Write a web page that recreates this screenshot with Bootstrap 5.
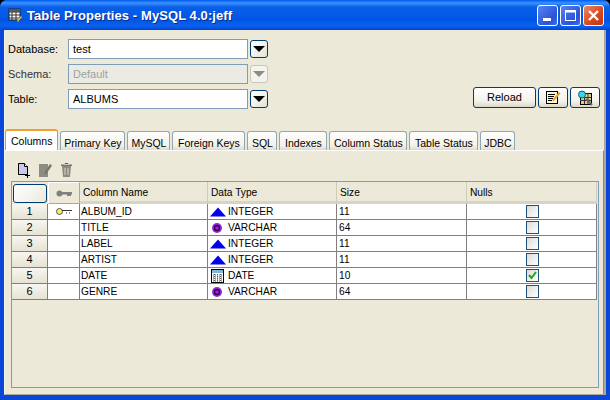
<!DOCTYPE html>
<html lang="en">
<head>
  <meta charset="UTF-8">
  <title>Table Properties</title>
  <link href="https://cdn.jsdelivr.net/npm/bootstrap@5.3.0/dist/css/bootstrap.min.css" rel="stylesheet">
  <style>
    html, body { width: 610px; height: 400px; margin: 0; overflow: hidden; background: #000; }
    body { font-family: "Liberation Sans", Arial, sans-serif; font-size: 11px; color: #000; line-height: 13px; }
    svg { display: block; }
    .xp-win { width: 610px; height: 400px; border-radius: 7px 7px 0 0; overflow: hidden; background: #0a46d8; }
    .xp-title {
      height: 30px; padding: 0 6px 0 8px;
      background: linear-gradient(to bottom, #0058ee 0, #3a93ff 3px, #0a5fe8 7px, #0055e5 20px, #0a62f0 26px, #0043cf 30px);
    }
    .xp-title-text { font-size: 13px; font-weight: bold; color: #fff; letter-spacing: .08px; margin-left: 4px; text-shadow: 1px 1px 0 #0f2a8c; }
    .cap-btn { width: 21px; height: 21px; border: 1px solid #fff; border-radius: 3px; background: linear-gradient(135deg, #5b84f0, #2a52d8 70%, #3d6cf0); margin-left: 2px; }
    .cap-close { background: linear-gradient(135deg, #e88a6c, #d8461c 60%, #c03510); }
    .xp-body { height: 365px; margin: 0 4px; background: #ece9d8; border-bottom: 1px solid #aca899; border-right: 2px solid #aca899; border-left: 1px solid #f4f2e8; }
    .top-area { height: 100px; padding: 9px 3px 0 3px; }
    .field-row { height: 20px; margin-bottom: 5px; }
    .field-label { width: 60px; }
    .field-label.off { color: #333; }
    .combo-box { width: 180px; height: 20px; border: 1px solid #7f9db9; background: #fff; padding: 0 4px; line-height: 18px; font-size: 11px; }
    .combo-box.off { background: #ebebe4; color: #a0a0a0; }
    .combo-btn { width: 18px; height: 18px; margin-left: 2px; border: 1px solid #003c74; border-radius: 3px; background: linear-gradient(135deg, #fff, #e4e2d6); }
    .combo-btn.off { border-color: #c9c7ba; background: #f4f3ec; }
    .tri-down { width: 0; height: 0; border-left: 6px solid transparent; border-right: 6px solid transparent; border-top: 6px solid #000; }
    .combo-btn.off .tri-down { border-top-color: #8c8c88; }
    .action-btns { padding: 48px 0 0 0; margin-left: auto; margin-right: 1px; gap: 2px; }
    .xp-btn { height: 21px; padding: 0; border: 1px solid #003c74; border-radius: 3px; background: linear-gradient(to bottom, #fff, #f3f2ea 70%, #dcd8c8); font-size: 11px; color: #000; }
    .xp-reload { width: 63px; }
    .xp-icon { width: 30px; }
    .xp-tabs { height: 20px; padding-left: 0; border: 0; gap: 2px; flex-wrap: nowrap; }
    .xp-tabs .nav-link {
      height: 19px; margin: 1px 0 0 0; padding: 5px 0 0 0; color: #000; font-size: 10.5px; line-height: 13px; white-space: nowrap; text-align: center;
      border: 1px solid #91a7b4; border-bottom: 0; border-radius: 3px 3px 0 0; background: linear-gradient(to bottom, #fff, #f3f1e8 75%, #dedbcc);
    }
    .xp-tabs .nav-link.active { height: 21px; margin: -1px 0 0 0; padding: 4px 5px 0 5px; background: #fff; border: 1px solid #91a7b4; border-top: 2px solid #f0a030; border-bottom: 0; }
    .tab-pk { width: 65px; }
    .tab-my { width: 43px; }
    .tab-fk { width: 73px; }
    .tab-sq { width: 30px; }
    .tab-ix { width: 48px; }
    .tab-cs { width: 78px; }
    .tab-ts { width: 69px; }
    .tab-jd { width: 35px; }
    .tab-pane-box { height: 244px; border-top: 1px solid #fff; border-right: 1px solid #8a8a80; padding: 9px 6px 0 6px; }
    .tool-row { height: 21px; padding: 2px 0 0 5px; gap: 6px; align-items: flex-start; }
    .grid-box { width: 588px; height: 207px; border: 1px solid #7f9db9; }
    .prop-grid { width: 585px; table-layout: fixed; border-collapse: separate; border-spacing: 0; margin: 0; --bs-table-bg: transparent; }
    .prop-grid > :not(caption) > * > * { padding: 0 3px; border: 0; box-shadow: none; font-size: 10.2px; line-height: 13px; vertical-align: middle; color: #000; }
    .prop-grid thead th { height: 22px; font-weight: normal; background: #ece9d8; border-bottom: 3px solid #d8d4c4; border-right: 1px solid #cfccbc; padding: 2px 0 0 3px; }
    .prop-grid thead th.corner { padding: 0; border: 0; }
    .prop-grid thead th.corner div { width: 34px; height: 19px; margin: 1px; border: 1px solid #003c74; border-radius: 3px; background: linear-gradient(135deg, #fff, #ece9dc); }
    .prop-grid thead th.key-head { padding: 0; border: 1px solid #fff; border-right-color: #aca899; border-bottom: 1px solid #aca899; }
    .prop-grid tbody td { height: 16px; background: #fff; border-bottom: 1px solid #808080; border-right: 1px solid #808080; padding: 0 1px 0 1px; }
    .prop-grid tbody tr > td:first-child { background: linear-gradient(to bottom, #f7f6f0, #e6e3d4); text-align: center; font-size: 11px; }
    .prop-grid tbody tr > td:nth-child(5), .prop-grid tbody tr > td:last-child { padding-left: 2px; }
    .type-cell { gap: 2px; height: 14px; padding-left: 1px; }
    .type-ico { width: 16px; flex: none; }
    .chk-box { width: 13px; height: 13px; margin: 0 auto; border: 1px solid #1c5180; background: linear-gradient(135deg, #dcdcd6, #fff); }
  </style>
</head>
<body>
  <div class="xp-win d-flex flex-column">
    <!-- title bar -->
    <div class="xp-title d-flex align-items-center">
      <svg width="15" height="15" viewBox="0 0 15 15"><rect x="1" y="1" width="11" height="11" fill="#fff" stroke="#222"/><path d="M1 4h11M1 7h11M1 10h11M4 1v11M8 1v11" stroke="#333"/><path d="M1 1h11v3H1z" fill="#555"/><path d="M9 13l4-5 1 1-4 5z" fill="#e8c040"/></svg>
      <span class="xp-title-text">Table Properties - MySQL 4.0:jeff</span>
      <div class="ms-auto d-flex align-items-center">
        <div class="cap-btn d-flex align-items-end"><svg width="19" height="19" viewBox="0 0 19 19"><rect x="5" y="12" width="8" height="3" fill="#fff"/></svg></div>
        <div class="cap-btn"><svg width="19" height="19" viewBox="0 0 19 19"><rect x="4.500" y="4.500" width="10" height="10" fill="none" stroke="#fff"/><rect x="4" y="4" width="11" height="2.500" fill="#fff"/></svg></div>
        <div class="cap-btn cap-close"><svg width="19" height="19" viewBox="0 0 19 19"><path d="M5 5l9 9M14 5l-9 9" stroke="#fff" stroke-width="2.400"/></svg></div>
      </div>
    </div>

    <div class="xp-body">
      <!-- connection fields -->
      <div class="top-area d-flex">
        <div>
          <div class="field-row d-flex align-items-center">
            <div class="field-label">Database:</div>
            <div class="combo-box">test</div>
            <div class="combo-btn d-flex align-items-center justify-content-center"><div class="tri-down"></div></div>
          </div>
          <div class="field-row d-flex align-items-center">
            <div class="field-label off">Schema:</div>
            <div class="combo-box off">Default</div>
            <div class="combo-btn off d-flex align-items-center justify-content-center"><div class="tri-down"></div></div>
          </div>
          <div class="field-row d-flex align-items-center">
            <div class="field-label">Table:</div>
            <div class="combo-box">ALBUMS</div>
            <div class="combo-btn d-flex align-items-center justify-content-center"><div class="tri-down"></div></div>
          </div>
        </div>
        <div class="action-btns d-flex align-items-start">
          <button class="xp-btn xp-reload" type="button">Reload</button>
          <button class="xp-btn xp-icon d-flex align-items-center justify-content-center" type="button" aria-label="Edit">
            <svg width="16" height="15" viewBox="0 0 16 15"><rect x="1.500" y="1.500" width="11" height="12" fill="#fff8d8" stroke="#000"/><path d="M3 4.500h7M3 6.500h6M3 8.500h5M3 10.500h4" stroke="#000"/><path d="M7 10l7-8 1.500 1.500-7 8z" fill="#f0a020"/></svg>
          </button>
          <button class="xp-btn xp-icon d-flex align-items-center justify-content-center" type="button" aria-label="Find">
            <svg width="16" height="16" viewBox="0 0 16 16"><rect x="3.500" y="3.500" width="11" height="11" fill="#d8d080" stroke="#000"/><path d="M3 7.500h11M3 10.500h11M7.500 3v11M11 3v11" stroke="#333"/><path d="M9 9l6 6" stroke="#666" stroke-width="2"/><circle cx="5" cy="4.500" r="3.500" fill="#30d8f0" stroke="#106080"/></svg>
          </button>
        </div>
      </div>

      <!-- tabs -->
      <ul class="nav nav-tabs xp-tabs">
        <li class="nav-item"><a class="nav-link active" href="#">Columns</a></li>
        <li class="nav-item"><a class="nav-link tab-pk" href="#">Primary Key</a></li>
        <li class="nav-item"><a class="nav-link tab-my" href="#">MySQL</a></li>
        <li class="nav-item"><a class="nav-link tab-fk" href="#">Foreign Keys</a></li>
        <li class="nav-item"><a class="nav-link tab-sq" href="#">SQL</a></li>
        <li class="nav-item"><a class="nav-link tab-ix" href="#">Indexes</a></li>
        <li class="nav-item"><a class="nav-link tab-cs" href="#">Column Status</a></li>
        <li class="nav-item"><a class="nav-link tab-ts" href="#">Table Status</a></li>
        <li class="nav-item"><a class="nav-link tab-jd" href="#">JDBC</a></li>
      </ul>

      <div class="tab-pane-box">
        <div class="tool-row d-flex">
          <svg width="16" height="16" viewBox="0 0 16 16"><path d="M2.500 1.500h6l3 3v8h-9z" fill="#c8c8f0" stroke="#000"/><path d="M8.500 1.500v3h3" fill="#fff" stroke="#000"/><path d="M9 13.500h5M11.500 11v5" stroke="#000"/></svg>
          <svg width="15" height="16" viewBox="0 0 15 16"><path d="M1 2h9v13H1z" fill="#8c8c84"/><path d="M6 11l6-9 2 1.500-6 9z" fill="#777770"/></svg>
          <svg width="15" height="16" viewBox="0 0 15 16"><path d="M3 4h9l-1 11H4z" fill="#8c8c84"/><path d="M2 2.500h11v1.500H2z" fill="#777770"/><path d="M5.500 1h4v1.500h-4zM6 6v7M9 6v7" stroke="#ece9d8" stroke-width=".8"/></svg>
        </div>
        <div class="grid-box">
          <table class="table prop-grid">
            <colgroup><col style="width:36px"><col style="width:32px"><col style="width:128px"><col style="width:129px"><col style="width:130px"><col style="width:130px"></colgroup>
            <thead>
              <tr>
                <th class="corner"><div></div></th>
                <th class="key-head"><svg class="mx-auto" width="16" height="7" viewBox="0 0 16 7"><circle cx="3.500" cy="3.500" r="3" fill="#808080"/><rect x="6" y="2" width="10" height="2.500" fill="#808080"/><rect x="11" y="4" width="4" height="2" fill="#808080"/></svg></th>
                <th>Column Name</th><th>Data Type</th><th>Size</th><th>Nulls</th>
              </tr>
            </thead>
            <tbody id="gridRows"></tbody>
          </table>
        </div>
      </div>
    </div>
  </div>

  <script src="https://cdn.jsdelivr.net/npm/bootstrap@5.3.0/dist/js/bootstrap.bundle.min.js"></script>
  <script>
    const icons = {
      INTEGER: '<svg width="16" height="10" viewBox="0 0 16 10"><path d="M8 0.500L16 9.500H0z" fill="#0000ee"/></svg>',
      VARCHAR: '<svg width="16" height="12" viewBox="0 0 16 12"><circle cx="7" cy="6" r="5" fill="#a020e0"/><circle cx="7" cy="6" r="2.500" fill="none" stroke="#200040" stroke-width="1.300"/></svg>',
      DATE: '<svg width="16" height="14" viewBox="0 0 16 14"><rect x="1.500" y="0.500" width="12" height="13" fill="#fff" stroke="#000"/><rect x="2" y="1" width="11" height="3" fill="#80b8d8"/><path d="M3 6h9M3 8h9M3 10h9M3 12h9M4.500 5v8M7.500 5v8M10.500 5v8" stroke="#555" stroke-dasharray="1 1"/></svg>'
    };
    const keyIcon = '<svg class="mx-auto" width="16" height="7" viewBox="0 0 16 7"><circle cx="3.500" cy="3.500" r="3" fill="#f0f060" stroke="#555"/><path d="M6 2.500h10M10 5h1M13 5h1" stroke="#333"/></svg>';
    const checkIcon = '<svg width="11" height="11" viewBox="0 0 11 11"><path d="M2 5l2.500 3L9 2" fill="none" stroke="#21a121" stroke-width="2"/></svg>';
    const rows = [
      ['ALBUM_ID', 'INTEGER', 11, false],
      ['TITLE', 'VARCHAR', 64, false],
      ['LABEL', 'INTEGER', 11, false],
      ['ARTIST', 'INTEGER', 11, false],
      ['DATE', 'DATE', 10, true],
      ['GENRE', 'VARCHAR', 64, false]
    ];
    // fill the grid
    document.getElementById('gridRows').innerHTML = rows.map((r, i) =>
      '<tr><td>' + (i + 1) + '</td><td>' + (i === 0 ? keyIcon : '') + '</td><td>' + r[0] + '</td>' +
      '<td><div class="type-cell d-flex align-items-center"><span class="type-ico">' + icons[r[1]] + '</span>' + r[1] + '</div></td>' +
      '<td>' + r[2] + '</td><td><div class="chk-box">' + (r[3] ? checkIcon : '') + '</div></td></tr>'
    ).join('');
  </script>
</body>
</html>
